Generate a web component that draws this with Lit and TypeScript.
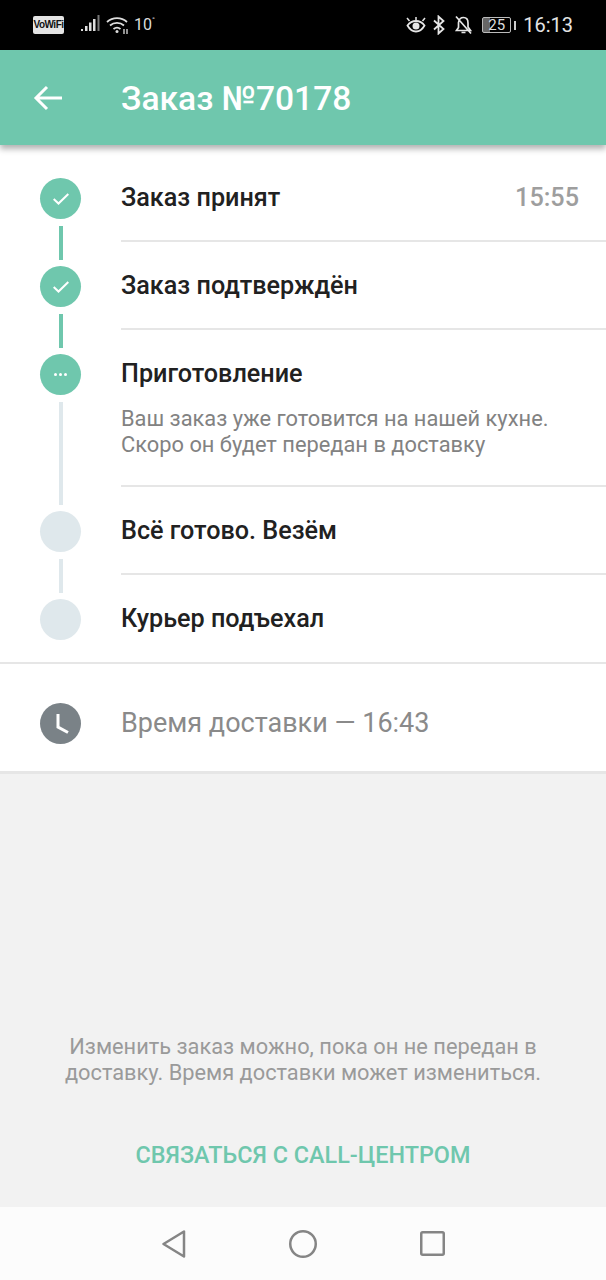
import { LitElement, html, css, svg } from "lit";
import { customElement } from "lit/decorators.js";

type Step = { title: string; state: "done" | "active" | "todo"; time?: string; desc?: string[]; line: boolean };

const steps: Step[] = [
  { title: "Заказ принят", state: "done", time: "15:55", line: true },
  { title: "Заказ подтверждён", state: "done", line: true },
  { title: "Приготовление", state: "active", desc: ["Ваш заказ уже готовится на нашей кухне.", "Скоро он будет передан в доставку"], line: true },
  { title: "Всё готово. Везём", state: "todo", line: true },
  { title: "Курьер подъехал", state: "todo", line: false },
];

const check = svg`<svg width="18" height="18" viewBox="0 0 18 18"><path d="M1.700 9 6.500 13.500 16.300 4" fill="none" stroke="#fff" stroke-width="2"/></svg>`;

@customElement("app-root")
export class AppRoot extends LitElement {
  static styles = css`
    :host { display: block; width: 606px; height: 1280px; font-family: Roboto, "Noto Sans", sans-serif; background: #f2f2f2; }
    .page { display: flex; flex-direction: column; height: 1280px; }
    .status { height: 50px; flex: none; background: #000; color: #ddd; display: flex; align-items: center; padding: 0 33px; box-sizing: border-box; }
    .status svg { display: block; flex: none; }
    .vowifi { background: #e4e4e4; color: #111; font: 700 10px/18px "Liberation Sans", sans-serif; border-radius: 2px; width: 31px; height: 18px; text-align: center; letter-spacing: -0.5px; }
    .signal { margin-left: 17px; }
    .wifi { margin-left: 5px; }
    .temp { font-size: 16px; margin-left: 4px; position: relative; top: -1px; }
    .temp sup { font-size: 8px; vertical-align: 8px; line-height: 0; }
    .spacer { flex: 1; }
    .eye { margin-right: 7px; }
    .bt { margin-right: 9px; }
    .bell { margin-right: 9px; }
    .batt { width: 29px; height: 16px; border: 1px solid #bbb; border-radius: 2px; box-sizing: border-box; font-size: 15px; line-height: 14px; text-align: center; background: linear-gradient(90deg, #666 0 25%, #000 25%); color: #ddd; }
    .nub { width: 2px; height: 9px; background: #ccc; margin: 0 7px 0 3px; }
    .clock { font-size: 20px; color: #e4e4e4; }

    .bar { height: 95px; flex: none; background: #6fc7ad; display: flex; align-items: center; color: #fff; box-shadow: 0 4px 6px rgba(0,0,0,.3); position: relative; z-index: 1; }
    .back { width: 121px; flex: none; padding-left: 33px; box-sizing: border-box; }
    .back svg { display: block; }
    .bar h1 { margin: 0; font-size: 33.600px; font-weight: 500; line-height: 1; position: relative; top: 1px; }

    .card { background: #fff; padding-top: 9px; flex: none; }
    .step { display: grid; grid-template-columns: 121px 1fr; }
    .rail { display: flex; flex-direction: column; align-items: center; padding-top: 24px; }
    .dot { width: 41px; height: 41px; border-radius: 50%; flex: none; display: flex; align-items: center; justify-content: center; gap: 2px; }
    .dot.done, .dot.active { background: #6fc7ad; }
    .dot.todo { background: #dfe8ec; }
    .dots { width: 3px; height: 3px; border-radius: 50%; background: #fff; }
    .line { width: 4px; flex: 1; margin-top: 7px; margin-bottom: -18px; background: #dfe8ec; position: relative; }
    .line.on { background: #6fc7ad; }
    .body { min-height: 57px; border-bottom: 2px solid #e6e6e6; padding-top: 29px; }
    .step:last-child .body { min-height: 58px; border-bottom: none; }
    .head { display: flex; justify-content: space-between; align-items: center; padding-right: 27px; }
    .title { font-size: 25.200px; font-weight: 500; line-height: 30px; color: #212121; }
    .time { font-size: 25.200px; font-weight: 500; line-height: 30px; color: #9e9e9e; }
    .desc { font-size: 21.850px; line-height: 26px; color: #828282; margin-top: 17px; padding-bottom: 27px; }

    .eta { background: #fff; border-top: 2px solid #e6e6e6; border-bottom: 3px solid #e6e6e6; height: 112px; padding-top: 11px; box-sizing: border-box; flex: none; display: grid; grid-template-columns: 121px 1fr; align-items: center; }
    .eta .ic { display: flex; justify-content: center; }
    .eta svg { display: block; }
    .eta span { font-size: 27px; color: #8a8a8a; }

    .foot { flex: 1; display: flex; flex-direction: column; align-items: center; justify-content: flex-end; }
    .note { font-size: 21.800px; line-height: 26px; color: #9a9a9a; text-align: center; margin-bottom: 54px; }
    .cta { font-size: 23.400px; font-weight: 500; color: #6fc7ad; line-height: 30px; margin-bottom: 37px; }
    .nav { flex: none; height: 73px; background: #fcfcfc; display: flex; align-items: center; justify-content: center; gap: 103px; }
    .nav svg { display: block; }
  `;

  private dot(s: Step) {
    return html`<div class="dot ${s.state}">
      ${s.state === "done" ? check : s.state === "active" ? html`<i class="dots"></i><i class="dots"></i><i class="dots"></i>` : ""}
    </div>`;
  }

  render() {
    return html`<div class="page">
      <div class="status">
        <div class="vowifi">VoWiFi</div>
        <svg class="signal" width="20" height="20" viewBox="0 0 20 20" fill="#ddd"><rect x="0" y="14" width="2" height="2"/><rect x="4" y="11" width="2.500" height="5"/><rect x="8" y="7.500" width="2.500" height="8.500"/><rect x="12" y="4" width="2.500" height="12"/><rect x="16.500" y="0" width="2" height="16" fill="#777"/></svg>
        <svg class="wifi" width="24" height="20" viewBox="0 0 24 20" fill="none" stroke="#ddd" stroke-width="1.800"><path d="M1 7a15 15 0 0 1 20 0M4 10.500a10.500 10.500 0 0 1 14 0M7.500 14a5.500 5.500 0 0 1 7 0"/><circle cx="11" cy="16.500" r="1.500" fill="#ddd" stroke="none"/><path d="M18 14v5M21 14v5" stroke-width="1.300"/></svg>
        <span class="temp">10<sup>°</sup></span>
        <div class="spacer"></div>
        <svg class="eye" width="20" height="18" viewBox="0 0 20 18" fill="none" stroke="#e6e6e6" stroke-width="1.800"><path d="M1.500 9.500C4 6 7 5 10 5s6 1 8.500 4.500C16 14 13 15.500 10 15.500S4 14 1.500 9.500Z"/><circle cx="10" cy="10" r="3.500" fill="#e6e6e6" stroke="none"/><path d="M1 2l2.500 3M19 2l-2.500 3M10 1v3" stroke-width="1.500"/></svg>
        <svg class="bt" width="12" height="20" viewBox="0 0 12 20" fill="none" stroke="#e6e6e6" stroke-width="1.800"><path d="M1 5.500 10.500 14 5.500 18.500V1.500L10.500 6 1 14.500"/></svg>
        <svg class="bell" width="19" height="20" viewBox="0 0 19 20" fill="none" stroke="#e6e6e6" stroke-width="1.700"><path d="M4.500 7.500C5 4 7 2.500 9.500 2.500S14 4.500 14 8v4l2.500 3.500H2.500L4.500 12.500ZM7.500 17.500h4M2 1.500l15 17"/></svg>
        <div class="batt">25</div><div class="nub"></div>
        <div class="clock">16:13</div>
      </div>

      <div class="bar">
        <div class="back"><svg width="30" height="26" viewBox="0 0 30 26" fill="none" stroke="#fff" stroke-width="3"><path d="M29 13H3M14 2 3 13l11 11"/></svg></div>
        <h1>Заказ №70178</h1>
      </div>

      <div class="card">
        ${steps.map((s) => html`<div class="step">
          <div class="rail">
            ${this.dot(s)}
            ${s.line ? html`<div class="line ${s.state === "done" ? "on" : ""}"></div>` : ""}
          </div>
          <div class="body">
            <div class="head"><div class="title">${s.title}</div>${s.time ? html`<div class="time">${s.time}</div>` : ""}</div>
            ${s.desc ? html`<div class="desc">${s.desc.map((d) => html`<div>${d}</div>`)}</div>` : ""}
          </div>
        </div>`)}
      </div>

      <div class="eta">
        <div class="ic"><svg width="41" height="41" viewBox="0 0 41 41"><circle cx="20.500" cy="20.500" r="20.500" fill="#7a8287"/><path d="M18 11v13l10 5.500" fill="none" stroke="#fff" stroke-width="3"/></svg></div>
        <span>Время доставки — 16:43</span>
      </div>

      <div class="foot">
        <div class="note">Изменить заказ можно, пока он не передан в<br>доставку. Время доставки может измениться.</div>
        <div class="cta">СВЯЗАТЬСЯ С CALL-ЦЕНТРОМ</div>
      </div>

      <div class="nav">
        <svg width="24" height="28" viewBox="0 0 24 28" fill="none" stroke="#858585" stroke-width="2.500" stroke-linejoin="round"><path d="M22 1.500V26.500L1.500 14Z"/></svg>
        <svg width="28" height="28" viewBox="0 0 28 28" fill="none" stroke="#858585" stroke-width="2.500"><circle cx="14" cy="14" r="12.750"/></svg>
        <svg width="25" height="25" viewBox="0 0 25 25" fill="none" stroke="#858585" stroke-width="2.500" stroke-linejoin="round"><rect x="1.250" y="1.250" width="22.500" height="22.500" rx="1.500"/></svg>
      </div>
    </div>`;
  }
}
